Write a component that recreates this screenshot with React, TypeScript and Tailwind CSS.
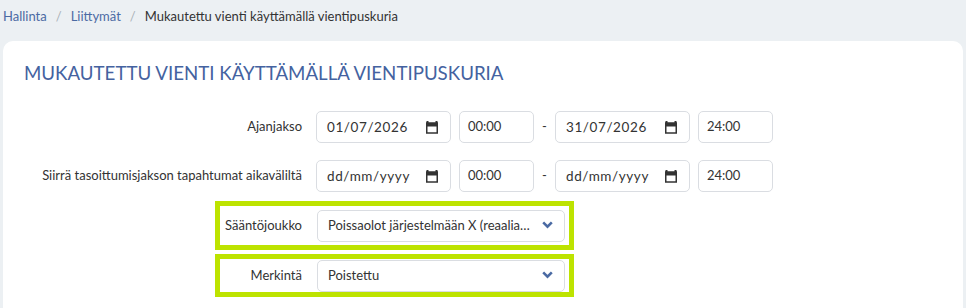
import React from "react";

const font = { fontFamily: 'Lato, "Noto Sans", sans-serif' };

function CalIcon() {
  return (
    <svg width="12" height="13" viewBox="0 0 12 13" className="shrink-0">
      <rect x="0.5" y="0" width="2" height="2" fill="#333" />
      <rect x="9.5" y="0" width="2" height="2" fill="#333" />
      <rect x="0" y="1.5" width="12" height="4" fill="#333" />
      <rect x="0.75" y="2.25" width="10.5" height="9.75" fill="none" stroke="#333" strokeWidth="1.5" />
    </svg>
  );
}

function DateBox({ value }: { value: string }) {
  return (
    <div className="w-[135px] h-[32px] border border-[#dadde2] rounded-[5px] flex items-center justify-between pl-[10px] pr-[12px] text-[13.5px] text-[#333] tracking-[0.6px]">
      <span>{value}</span>
      <CalIcon />
    </div>
  );
}

function TimeBox({ value }: { value: string }) {
  return (
    <div className="w-[75px] h-[32px] border border-[#dadde2] rounded-[5px] flex items-center pl-[8px] text-[13px] text-[#333]">
      {value}
    </div>
  );
}

function Chevron() {
  return (
    <svg width="11" height="8" viewBox="0 0 11 8" className="absolute right-[11px] top-[10px]">
      <path d="M1.2 1.4 L5.5 5.6 L9.8 1.4" fill="none" stroke="#4a6aa3" strokeWidth="2.6" strokeLinejoin="miter" />
    </svg>
  );
}

function SelectBox({ value }: { value: string }) {
  return (
    <div className="relative w-[248px] h-[32px] border border-[#dadde2] rounded-[5px] flex items-center pl-[10px] pr-[32px] text-[13px] text-[#333]">
      <span className="truncate">{value}</span>
      <Chevron />
    </div>
  );
}

export default function App() {
  return (
    <div className="min-h-[308px] bg-[#ecf0f3] overflow-hidden" style={font}>
      <nav className="h-[33px] flex items-center pl-[3px] text-[13px]">
        <span className="text-[#4b6aa3]">Hallinta</span>
        <span className="text-[#aab0b8] mx-[9px]">/</span>
        <span className="text-[#4b6aa3]">Liittymät</span>
        <span className="text-[#aab0b8] mx-[9px]">/</span>
        <span className="text-[#333]">Mukautettu vienti käyttämällä vientipuskuria</span>
      </nav>
      <div className="mx-[3px] mt-[8px] bg-white rounded-t-[10px] pl-[21px] pt-[21px] pb-[10px] min-h-[270px]">
        <h1 className="text-[18.7px] leading-[22px] text-[#4462a0] uppercase whitespace-nowrap">
          Mukautettu vienti käyttämällä vientipuskuria
        </h1>
        <div className="mt-[27px] flex flex-col">
          <div className="flex items-center h-[32px]">
            <div className="w-[278px] text-right text-[13px] text-[#333] whitespace-nowrap">Ajanjakso</div>
            <div className="ml-[14px] flex items-center">
              <DateBox value="01/07/2026" />
              <div className="ml-[8px]"><TimeBox value="00:00" /></div>
              <div className="w-[21px] text-center text-[13px] text-[#333]">-</div>
              <DateBox value="31/07/2026" />
              <div className="ml-[8px]"><TimeBox value="24:00" /></div>
            </div>
          </div>
          <div className="flex items-center h-[32px] mt-[17px]">
            <div className="w-[278px] text-right text-[13px] text-[#333] whitespace-nowrap">Siirrä tasoittumisjakson tapahtumat aikaväliltä</div>
            <div className="ml-[14px] flex items-center">
              <DateBox value="dd/mm/yyyy" />
              <div className="ml-[8px]"><TimeBox value="00:00" /></div>
              <div className="w-[21px] text-center text-[13px] text-[#333]">-</div>
              <DateBox value="dd/mm/yyyy" />
              <div className="ml-[8px]"><TimeBox value="24:00" /></div>
            </div>
          </div>
          <div className="ml-[191px] mt-[9px] w-[359px] border-[5px] border-[#bde300] h-[49px] flex items-center pr-[3px]">
            <div className="w-[82px] text-right text-[13px] text-[#333] whitespace-nowrap">Sääntöjoukko</div>
            <div className="ml-[15px]"><SelectBox value="Poissaolot järjestelmään X (reaaliaikainen)" /></div>
          </div>
          <div className="ml-[191px] mt-[4px] w-[359px] border-[5px] border-[#bde300] h-[43px] flex items-center pr-[3px]">
            <div className="w-[82px] text-right text-[13px] text-[#333] whitespace-nowrap">Merkintä</div>
            <div className="ml-[15px]"><SelectBox value="Poistettu" /></div>
          </div>
        </div>
      </div>
    </div>
  );
}
